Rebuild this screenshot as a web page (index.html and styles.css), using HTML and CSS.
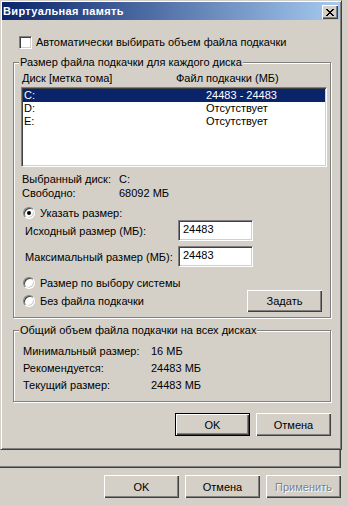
FILE: index.html
```html
<!DOCTYPE html>
<html lang="ru">

<head>
    <meta charset="UTF-8">
    <meta name="viewport" content="width=device-width, initial-scale=1.0">
    <title>Виртуальная память</title>
    <link rel="stylesheet" href="styles.css">
</head>

<body>
    <div class="dialog">
        <div class="titlebar">
            <span class="title">Виртуальная память</span>
            <span class="close-btn">
                <svg width="8" height="7" viewBox="0 0 8 7" shape-rendering="crispEdges">
                    <path fill="#000" d="M0 0h2v1H0zM6 0h2v1H6zM1 1h2v1H1zM5 1h2v1H5zM2 2h4v1H2zM3 3h2v1H3zM2 4h4v1H2zM1 5h2v1H1zM5 5h2v1H5zM0 6h2v1H0zM6 6h2v1H6z"/>
                </svg>
            </span>
        </div>

        <div class="dlg-body">
            <div class="check-row"><span class="checkbox"></span>Автоматически выбирать объем файла подкачки</div>

            <div class="group group-drives">
                <span class="legend">Размер файла подкачки для каждого диска</span>
                <div class="list-head">
                    <span class="head-disk">Диск [метка тома]</span>
                    <span>Файл подкачки (МБ)</span>
                </div>
                <div class="listbox">
                    <div class="list-row selected"><span class="row-disk">C:</span><span>24483 - 24483</span></div>
                    <div class="list-row"><span class="row-disk">D:</span><span>Отсутствует</span></div>
                    <div class="list-row"><span class="row-disk">E:</span><span>Отсутствует</span></div>
                </div>

                <div class="info-row first"><span class="info-label">Выбранный диск:</span><span>C:</span></div>
                <div class="info-row"><span class="info-label">Свободно:</span><span>68092 МБ</span></div>

                <div class="radio-row first"><span class="radio checked"></span>Указать размер:</div>
                <div class="field-row">
                    <span class="field-label">Исходный размер (МБ):</span>
                    <span class="textbox">24483</span>
                </div>
                <div class="field-row second">
                    <span class="field-label">Максимальный размер (МБ):</span>
                    <span class="textbox">24483</span>
                </div>
                <div class="radio-row system"><span class="radio"></span>Размер по выбору системы</div>
                <div class="radio-row none">
                    <span class="radio"></span>Без файла подкачки
                    <button class="btn btn-set">Задать</button>
                </div>
            </div>

            <div class="group group-total">
                <span class="legend">Общий объем файла подкачки на всех дисках</span>
                <div class="total-row"><span class="total-label">Минимальный размер:</span><span>16 МБ</span></div>
                <div class="total-row"><span class="total-label">Рекомендуется:</span><span>24483 МБ</span></div>
                <div class="total-row"><span class="total-label">Текущий размер:</span><span>24483 МБ</span></div>
            </div>

            <div class="dlg-buttons">
                <button class="btn default">OK</button>
                <button class="btn">Отмена</button>
            </div>
        </div>
    </div>

    <div class="tab-rest"></div>

    <div class="parent-buttons">
        <button class="btn">OK</button>
        <button class="btn">Отмена</button>
        <button class="btn disabled">Применить</button>
    </div>
</body>

</html>
```

FILE: styles.css
```css
/* классический серый диалог Windows */

* {
    padding: 0;
    margin: 0;
    box-sizing: border-box;
}

body {
    width: 348px;
    height: 506px;
    overflow: hidden;
    background-color: #d4d0c8;
    font-family: "Liberation Sans", Arial, sans-serif;
    font-size: 11px;
    color: #000;
}

.dialog {
    width: 342px;
    height: 450px;
    padding: 1px;
    border: 1px solid;
    border-color: #d4d0c8 #404040 #404040 #d4d0c8;
    box-shadow: inset 1px 1px 0 #fff, inset -1px -1px 0 #808080;
    display: flex;
    flex-direction: column;
}

.titlebar {
    height: 18px;
    display: flex;
    align-items: flex-start;
    padding: 0 2px 0 1px;
    background: linear-gradient(to right, #0a246a, #a6caf0);
}

.title {
    flex: 1;
    line-height: 18px;
    font-weight: bold;
    letter-spacing: 0.35px;
    color: #fff;
}

.close-btn {
    width: 16px;
    height: 14px;
    margin-top: 3px;
    display: flex;
    align-items: center;
    justify-content: center;
    background-color: #d4d0c8;
    box-shadow: inset 1px 1px 0 #fff, inset -1px -1px 0 #404040, inset -2px -2px 0 #808080;
}

.close-btn svg {
    display: block;
}

.dlg-body {
    padding: 16px 9px 0 11px;
}

.check-row {
    height: 13px;
    line-height: 13px;
    display: flex;
    align-items: center;
    padding-left: 6px;
}

.checkbox {
    width: 13px;
    height: 13px;
    margin-right: 4px;
    background-color: #fff;
    border: 1px solid;
    border-color: #808080 #fff #fff #808080;
    box-shadow: inset 1px 1px 0 #404040, inset -1px -1px 0 #d4d0c8;
}

/* рамки групп */
.group {
    position: relative;
    width: 318px;
    border: 1px solid #808080;
    box-shadow: inset 1px 1px 0 #fff, 1px 1px 0 #fff;
}

.legend {
    position: absolute;
    top: -7px;
    left: 5px;
    padding: 0 1px;
    line-height: 13px;
    background-color: #d4d0c8;
}

.group-drives {
    margin-top: 13px;
    padding: 9px 0 5px;
}

.list-head {
    display: flex;
    line-height: 13px;
    padding-left: 8px;
}

.head-disk {
    width: 154px;
}

.listbox {
    height: 80px;
    margin: 2px 3px 0 7px;
    background-color: #fff;
    border: 1px solid;
    border-color: #808080 #fff #fff #808080;
    box-shadow: inset 1px 1px 0 #404040, inset -1px -1px 0 #d4d0c8;
    padding: 1px;
}

.list-row {
    display: flex;
    height: 13px;
    line-height: 13px;
    padding-left: 1px;
}

.list-row.selected {
    background-color: #0a246a;
    color: #fff;
}

.row-disk {
    width: 182px;
}

.info-row {
    display: flex;
    line-height: 14px;
    padding-left: 8px;
}

.info-row.first {
    margin-top: 5px;
}

.info-label {
    width: 97px;
}

.radio-row {
    display: flex;
    align-items: center;
    height: 14px;
    padding-left: 9px;
}

.radio-row.first {
    margin-top: 6px;
}

.radio-row.system {
    margin-top: 9px;
}

.radio-row.none {
    height: 22px;
}

.radio {
    position: relative;
    width: 12px;
    height: 12px;
    margin-right: 5px;
    border-radius: 50%;
    background-color: #fff;
    border: 1px solid;
    border-color: #808080 #fff #fff #808080;
    box-shadow: inset 1px 1px 0 #404040, inset -1px -1px 0 #d4d0c8;
}

.radio.checked::after {
    content: "";
    position: absolute;
    left: 3px;
    top: 3px;
    width: 4px;
    height: 4px;
    border-radius: 50%;
    background-color: #000;
}

.field-row {
    display: flex;
    align-items: center;
    height: 21px;
    padding-left: 11px;
}

.field-row.second {
    margin-top: 5px;
}

.field-label {
    width: 153px;
}

.textbox {
    width: 75px;
    height: 21px;
    line-height: 17px;
    padding-left: 4px;
    background-color: #fff;
    border: 1px solid;
    border-color: #808080 #fff #fff #808080;
    box-shadow: inset 1px 1px 0 #404040, inset -1px -1px 0 #d4d0c8;
}

/* кнопки */
.btn {
    width: 75px;
    height: 23px;
    border: none;
    background-color: #d4d0c8;
    font-family: inherit;
    font-size: 11px;
    color: #000;
    box-shadow: inset 1px 1px 0 #fff, inset -1px -1px 0 #404040, inset -2px -2px 0 #808080;
}

.btn.default {
    border: 1px solid #000;
}

.btn.disabled {
    color: #808080;
    text-shadow: 1px 1px 0 #fff;
}

.btn-set {
    height: 22px;
    margin-left: auto;
    margin-right: 8px;
}

.group-total {
    margin-top: 12px;
    padding: 12px 0 7px 9px;
}

.total-row {
    display: flex;
    line-height: 17px;
}

.total-label {
    width: 128px;
}

.dlg-buttons {
    display: flex;
    justify-content: flex-end;
    gap: 6px;
    margin-top: 11px;
    width: 318px;
}

/* остаток родительского окна */
.tab-rest {
    width: 341px;
    height: 18px;
    border-right: 1px solid #404040;
    border-bottom: 1px solid #404040;
    box-shadow: inset -1px -1px 0 #808080;
}

.parent-buttons {
    display: flex;
    justify-content: flex-end;
    gap: 6px;
    width: 341px;
    margin-top: 7px;
}
```
